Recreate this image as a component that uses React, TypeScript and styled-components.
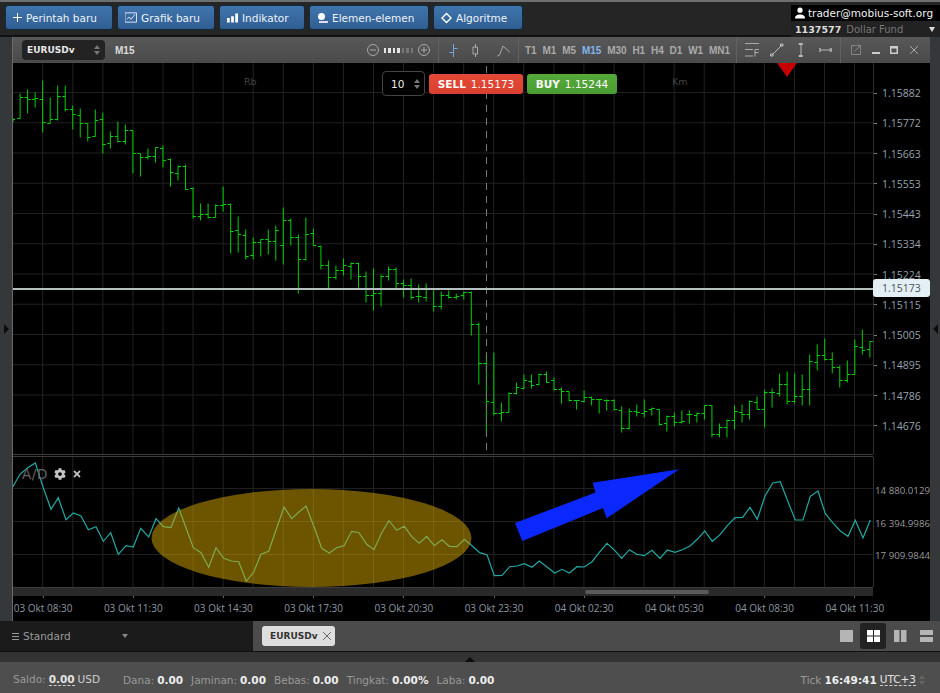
import { FC } from 'react';
import styled, { createGlobalStyle } from 'styled-components';
import { FaCog, FaTimes } from 'react-icons/fa';

const BASE_FONT = '"DejaVu Sans", "Liberation Sans", sans-serif';
const AXIS_FONT = '"Open Sans", "DejaVu Sans", sans-serif';

const GlobalStyle = createGlobalStyle`
  html, body {
    margin: 0;
    padding: 0;
    background: #2a2a2a;
  }
  * {
    box-sizing: border-box;
  }
`;

const Page = styled.div`
  width: 940px;
  height: 693px;
  display: flex;
  flex-direction: column;
  overflow: hidden;
  font-family: ${BASE_FONT};
  font-size: 10.5px;
  background: #2a2a2a;
`;

/* top bar */
const TopBar = styled.header`
  height: 37px;
  flex: none;
  display: flex;
  align-items: flex-start;
  gap: 4px;
  padding: 5px 0 0 5px;
  background: #252525;
  border-top: 2px solid #6d7072;
  border-bottom: 2px solid #111;
`;

const MenuButton = styled.button<{ $width: number }>`
  width: ${p => p.$width}px;
  height: 25px;
  margin-top: -2px;
  display: flex;
  align-items: center;
  gap: 4px;
  padding: 0 0 0 7px;
  font: inherit;
  font-size: 10.5px;
  color: #eef3f8;
  background: linear-gradient(#3f75ad, #305e92);
  border: 1px solid #16283c;
  border-radius: 3px;
`;

const Account = styled.div`
  margin: -2px 0 0 auto;
  width: 149px;
  height: 33px;
  display: flex;
  flex-direction: column;
`;

const AccountMail = styled.div`
  height: 16px;
  display: flex;
  align-items: center;
  gap: 2px;
  padding-left: 3px;
  background: #000;
  color: #f2f2f2;
  font-size: 10.5px;
`;

const AccountFund = styled.div`
  flex: 1;
  display: flex;
  align-items: center;
  gap: 5px;
  padding: 0 5px 0 4px;
  background: #222;
  color: #777;
  font-size: 10px;
  b {
    color: #ddd;
    font-size: 9.5px;
  }
  i {
    margin-left: auto;
    border-left: 3.5px solid transparent;
    border-right: 3.5px solid transparent;
    border-top: 5px solid #ddd;
  }
`;

/* chart window */
const Workspace = styled.main`
  height: 584px;
  flex: none;
  display: flex;
`;

const SideStrip = styled.div<{ $width: number; $flip?: boolean }>`
  width: ${p => p.$width}px;
  flex: none;
  display: flex;
  align-items: center;
  justify-content: center;
  background: #35383b;
  &::after {
    content: '';
    border-top: 5px solid transparent;
    border-bottom: 5px solid transparent;
    ${p => (p.$flip ? 'border-right: 5px solid #0c0c0c;' : 'border-left: 5px solid #0c0c0c;')}
  }
`;

const ChartWindow = styled.section`
  width: 918px;
  flex: none;
  display: flex;
  flex-direction: column;
  overflow: hidden;
  background: #000;
  border-left: 1px solid #6a6a6a;
`;

const Toolbar = styled.div`
  height: 26px;
  flex: none;
  display: flex;
  background: linear-gradient(#585858, #4a4a4a);
`;

const ToolSection = styled.div<{ $width: number; $gap: number; $pad: number }>`
  width: ${p => p.$width}px;
  flex: none;
  display: flex;
  align-items: center;
  gap: ${p => p.$gap}px;
  padding-left: ${p => p.$pad}px;
  border-left: 1px solid #616161;
  &:first-child {
    border-left: 0;
  }
`;

const SymbolSelect = styled.div`
  width: 83px;
  height: 20px;
  display: flex;
  align-items: center;
  justify-content: space-between;
  padding: 0 5px;
  font-size: 9px;
  font-weight: 700;
  color: #e8e8e8;
  background: #232323;
  border-radius: 4px;
`;

const Period = styled.span<{ $active?: boolean }>`
  font-family: "Liberation Sans", sans-serif;
  font-size: 10px;
  font-weight: 700;
  color: ${p => (p.$active ? '#82b4e6' : '#aaa')};
`;

const CurrentPeriod = styled(Period)`
  color: #ddd;
  margin-right: auto;
`;

const Spinner = styled.span<{ $color?: string }>`
  display: inline-flex;
  flex-direction: column;
  gap: 2px;
  &::before,
  &::after {
    content: '';
    border-left: 3px solid transparent;
    border-right: 3px solid transparent;
  }
  &::before {
    border-bottom: 4px solid ${p => p.$color || '#777'};
  }
  &::after {
    border-top: 4px solid ${p => p.$color || '#777'};
  }
`;

const ZoomDots = styled.span`
  display: flex;
  gap: 2px;
  margin: 0 -2px;
`;

const ZoomDot = styled.i<{ $on: boolean }>`
  width: 2.5px;
  height: 5px;
  background: ${p => (p.$on ? '#e6e6e6' : '#777')};
`;

const Icon = styled.svg<{ $left?: number; $right?: number }>`
  flex: none;
  display: block;
  fill: none;
  stroke-linecap: square;
  margin-left: ${p => p.$left || 0}px;
  margin-right: ${p => p.$right || 0}px;
`;

const Pane = styled.div<{ $height: number }>`
  height: ${p => p.$height}px;
  flex: none;
  display: flex;
  position: relative;
`;

const Plot = styled.svg<{ $height: number }>`
  width: 860px;
  height: ${p => p.$height}px;
  flex: none;
  display: block;
  background: #000;
`;

const PriceAxis = styled.div`
  flex: 1;
  display: flex;
  flex-direction: column;
  padding-top: 15px;
  border-left: 1px solid #2e2e2e;
`;

const PriceLabel = styled.div`
  height: 30.25px;
  flex: none;
  display: flex;
  align-items: center;
  font-family: ${AXIS_FONT};
  font-size: 10.5px;
  color: #97a3ad;
  &::before {
    content: '';
    width: 3px;
    height: 1px;
    margin-right: 5px;
    background: #777;
  }
`;

const PriceTag = styled.div`
  position: absolute;
  left: 860px;
  top: 216px;
  width: 57px;
  height: 18px;
  padding-left: 9px;
  line-height: 18px;
  font-family: ${AXIS_FONT};
  font-size: 10.5px;
  color: #4a5258;
  background: #e3eff4;
  border-radius: 3px;
`;

const WaterMark = styled.span<{ $left: number }>`
  position: absolute;
  left: ${p => p.$left}px;
  top: 13px;
  font-size: 9.5px;
  color: #444;
`;

const OrderBar = styled.div`
  position: absolute;
  left: 369px;
  top: 8px;
  display: flex;
  align-items: center;
  gap: 4px;
`;

const QuantityBox = styled.div`
  width: 43px;
  height: 25px;
  display: flex;
  align-items: center;
  justify-content: space-between;
  padding: 0 4px 0 8px;
  font-size: 10.5px;
  color: #eee;
  background: #000;
  border: 1px solid #444;
  border-radius: 4px;
`;

const TradeButton = styled.div<{ $width: number; $from: string; $to: string }>`
  width: ${p => p.$width}px;
  height: 20px;
  display: flex;
  align-items: center;
  justify-content: center;
  gap: 5px;
  font-size: 10.5px;
  color: #fbfbfb;
  background: linear-gradient(${p => p.$from}, ${p => p.$to});
  border-radius: 3px;
  b {
    font-weight: 700;
  }
`;

const TopMarker = styled.div`
  position: absolute;
  left: 764px;
  top: 0;
  border-left: 10px solid transparent;
  border-right: 10px solid transparent;
  border-top: 14px solid #c40000;
`;

const PaneDivider = styled.div`
  height: 3px;
  width: 860px;
  flex: none;
  border-top: 1px solid #3c3c3c;
  border-bottom: 1px solid #3c3c3c;
`;

const IndicatorAxis = styled.div`
  flex: 1;
  min-width: 0;
  display: flex;
  flex-direction: column;
  padding-top: 17px;
  border-left: 1px solid #2e2e2e;
`;

const IndicatorLabel = styled.div`
  height: 32.7px;
  flex: none;
  display: flex;
  align-items: center;
  justify-content: flex-end;
  white-space: nowrap;
  font-family: ${AXIS_FONT};
  font-size: 9.7px;
  color: #999;
`;

const IndicatorTitle = styled.div`
  position: absolute;
  left: 9px;
  top: 9px;
  display: flex;
  align-items: center;
  gap: 6px;
  font-size: 13.5px;
  letter-spacing: 0.6px;
  color: #666;
  svg {
    color: #c4c4c4;
  }
`;

const ScrollRow = styled.div`
  width: 860px;
  height: 9px;
  flex: none;
  padding: 2px 0 0 572px;
  background: #2a2a2a;
  border-top: 1px solid #3a3a3a;
`;

const ScrollThumb = styled.div`
  width: 124px;
  height: 4px;
  border-radius: 2px;
  background: #5a5a5a;
`;

const TimeAxis = styled.div`
  flex: 1;
  display: flex;
  margin-left: -15px;
`;

const TimeLabel = styled.div`
  width: 90.2px;
  flex: none;
  display: flex;
  flex-direction: column;
  align-items: center;
  gap: 4px;
  font-family: ${AXIS_FONT};
  font-size: 10px;
  line-height: 12px;
  white-space: nowrap;
  color: #8b97a1;
  &::before {
    content: '';
    width: 1px;
    height: 2px;
    background: #666;
  }
`;

/* tabs and status */
const TabBar = styled.div`
  height: 31px;
  flex: none;
  display: flex;
  background: #4b4b4b;
  border-bottom: 1px solid #111;
`;

const WorkspacePicker = styled.div`
  width: 253px;
  flex: none;
  display: flex;
  align-items: center;
  gap: 4px;
  padding-left: 12px;
  font-size: 10.5px;
  color: #999;
  background: #1b1b1b;
  i {
    margin-left: 47px;
    border-left: 3.5px solid transparent;
    border-right: 3.5px solid transparent;
    border-top: 4px solid #888;
  }
`;

const Tab = styled.div`
  width: 73px;
  height: 20px;
  margin: 5px 0 0 9px;
  display: flex;
  align-items: center;
  gap: 5px;
  padding-left: 8px;
  font-size: 9px;
  font-weight: 700;
  color: #333;
  background: #dedede;
  border-radius: 3px;
`;

const LayoutGroup = styled.div`
  margin-left: auto;
  display: flex;
  align-items: center;
  gap: 7px;
  padding-right: 7px;
`;

const LayoutButton = styled.div<{ $active?: boolean; $left?: number }>`
  width: ${p => (p.$active ? 26 : 13)}px;
  height: 26px;
  margin-left: ${p => p.$left || 0}px;
  display: flex;
  align-items: center;
  justify-content: center;
  border-radius: 3px;
  background: ${p => (p.$active ? '#222' : 'transparent')};
`;

const Splitter = styled.div`
  height: 10px;
  flex: none;
  display: flex;
  justify-content: center;
  padding: 2px 0 0;
  background: #333;
  &::after {
    content: '';
    border-left: 5px solid transparent;
    border-right: 5px solid transparent;
    border-bottom: 5px solid #0c0c0c;
  }
`;

const StatusBar = styled.footer`
  height: 31px;
  flex: none;
  display: flex;
  align-items: center;
  gap: 8px;
  padding: 4px 0 0 13px;
  color: #999;
  font-size: 10.5px;
  background: #4e4e4e;
`;

const StatusItem = styled.span<{ $wide?: boolean }>`
  display: flex;
  gap: 3px;
  white-space: nowrap;
  margin-right: ${p => (p.$wide ? 15 : 0)}px;
  b {
    color: #eee;
  }
`;

const Dotted = styled.span`
  color: #e4e4e4;
  border-bottom: 1px dashed #ccc;
`;

const DottedValue = styled(Dotted)`
  font-weight: 700;
`;

const Plain = styled.span`
  color: #d0d0d0;
`;

const Clock = styled.div`
  margin-left: auto;
  padding-right: 15px;
  display: flex;
  align-items: center;
  gap: 3px;
  b {
    color: #eee;
  }
`;

/* data */
type Bar = [number, number, number, number];

const toBars = (top: number, rows: Bar[]): Bar[] =>
  rows.map(row => row.map(v => Math.round(top + v / 3) + 0.5) as Bar);

const BARS: Bar[] = [
  ...toBars(70, [
    [70, 145, 145, 82], [58, 128, 82, 88], [65, 110, 88, 85], [30, 186, 88, 157], [82, 160, 160, 146],
    [45, 150, 146, 78], [45, 123, 78, 118], [104, 178, 118, 133], [115, 200, 135, 160], [158, 212, 160, 200],
    [118, 198, 197, 151], [127, 248, 148, 223], [183, 235, 220, 198], [152, 215, 197, 214], [163, 223, 214, 181],
    [180, 310, 181, 250], [250, 317, 250, 262], [235, 268, 261, 259], [230, 277, 259, 231], [226, 290, 235, 271],
    [265, 347, 268, 307], [286, 330, 310, 287], [282, 358, 289, 358], [352, 445, 355, 437], [400, 449, 437, 431],
    [400, 445, 431, 440], [403, 442, 440, 404], [348, 423, 406, 403], [400, 550, 402, 482], [438, 545, 479, 493],
    [478, 567, 496, 559], [502, 567, 556, 517], [506, 558, 517, 507], [478, 553, 507, 514], [465, 570, 514, 481],
    [411, 581, 526, 451], [445, 525, 451, 502], [492, 668, 502, 567], [440, 570, 567, 493], [473, 525, 490, 524],
  ]),
  ...toBars(230, [
    [45, 118, 47, 106], [90, 175, 106, 140], [106, 146, 140, 121], [83, 135, 121, 106], [97, 146, 108, 98],
    [97, 170, 98, 138], [124, 217, 138, 196], [115, 239, 196, 188], [132, 228, 188, 137], [109, 149, 137, 118],
    [112, 173, 118, 160], [146, 200, 160, 166], [143, 208, 166, 202], [163, 215, 199, 199], [160, 212, 202, 178],
    [178, 242, 178, 228], [183, 236, 228, 196], [179, 205, 196, 202], [188, 208, 202, 197], [184, 208, 196, 185],
    [184, 316, 185, 281], [277, 463, 281, 400], [375, 612, 400, 513], [366, 555, 516, 550], [516, 572, 550, 545],
    [487, 546, 545, 488], [456, 491, 488, 472], [433, 477, 475, 451], [431, 473, 454, 464], [430, 465, 463, 431],
    [422, 455, 431, 455], [440, 481, 451, 476], [470, 518, 476, 484], [484, 512, 484, 510], [510, 536, 511, 511],
    [479, 516, 514, 502], [498, 525, 502, 508], [506, 548, 508, 507], [508, 540, 510, 510],
  ]),
  ...toBars(260, [
    [418, 450, 420, 448], [438, 515, 450, 505], [445, 508, 505, 453], [432, 468, 453, 456], [417, 470, 458, 453],
    [442, 465, 448, 445], [447, 494, 448, 492], [465, 512, 490, 467], [457, 497, 467, 485], [450, 490, 485, 484],
    [450, 490, 463, 463], [456, 485, 464, 458], [435, 477, 458, 436], [435, 530, 436, 522], [490, 530, 522, 502],
    [476, 530, 502, 479], [436, 508, 479, 453], [433, 486, 456, 461], [420, 478, 461, 424], [408, 448, 426, 447],
    [388, 500, 447, 396], [385, 440, 396, 396], [340, 408, 400, 373], [334, 432, 373, 424], [340, 430, 424, 408],
    [343, 435, 408, 388], [282, 435, 388, 303], [252, 330, 305, 284], [233, 300, 284, 297], [277, 340, 297, 322],
    [316, 381, 320, 360], [300, 367, 360, 342], [238, 342, 342, 258], [207, 283, 260, 271], [243, 290, 268, 243],
  ]),
];

const barsPath = BARS.map(([high, low, open, close], i) => {
  const x = 20.1 + i * 7.52;
  return `M${x} ${high}V${low}M${x - 3} ${open}H${x}M${x} ${close}H${x + 3}`;
}).join('') + 'M13 119.5H15M13 118V122';

const toLine = (left: number, top: number, rows: number[][]): string[] =>
  rows.map(([x, y]) => `${(left + x / 3).toFixed(1)},${(top + y / 3).toFixed(1)}`);

const AD_LINE = [
  ...toLine(0, 450, [
    [38, 108], [60, 70], [83, 50], [106, 36], [130, 110], [153, 175], [175, 140], [198, 206], [220, 186], [243, 195],
    [265, 236], [288, 227], [310, 271], [332, 245], [355, 310], [378, 284], [400, 288], [422, 232], [446, 258],
    [468, 203], [490, 227], [513, 230], [536, 171], [558, 230], [580, 290], [603, 305], [626, 349], [648, 290],
    [671, 322], [694, 330], [716, 332], [739, 391], [761, 363], [783, 310], [806, 301], [829, 235], [852, 168],
    [875, 203], [897, 183],
  ]),
  ...toLine(300, 450, [
    [18, 165], [42, 227], [65, 292], [88, 306], [110, 290], [132, 284], [155, 241], [177, 245], [200, 280], [222, 296],
    [245, 245], [267, 209], [290, 238], [313, 226], [335, 257], [358, 277], [380, 256], [403, 284], [426, 266],
    [448, 286], [471, 287], [493, 265], [516, 284], [539, 305], [561, 311], [583, 374], [606, 373], [629, 347],
    [651, 345], [673, 338], [696, 349], [718, 330], [741, 348], [764, 366], [786, 355], [808, 366], [831, 347],
    [853, 348], [876, 332], [898, 304], [921, 277], [944, 298],
  ]),
  ...toLine(620, 450, [
    [5, 322], [28, 296], [50, 310], [73, 314], [96, 298], [120, 322], [142, 297], [165, 304], [187, 296], [210, 285],
    [232, 265], [254, 240], [277, 271], [300, 251], [322, 224], [345, 200], [368, 199], [390, 169], [412, 205],
    [435, 135], [458, 96], [481, 92], [503, 150], [526, 207], [549, 207], [571, 136], [594, 120], [616, 188],
    [638, 215], [661, 240], [684, 256], [706, 208], [729, 261], [751, 207],
  ]),
].join(' ');

const PRICES = [
  '1.15882', '1.15772', '1.15663', '1.15553', '1.15443', '1.15334',
  '1.15224', '1.15115', '1.15005', '1.14895', '1.14786', '1.14676',
];
const PERIODS = ['T1', 'M1', 'M5', 'M15', 'M30', 'H1', 'H4', 'D1', 'W1', 'MN1'];
const TIMES = [
  '03 Okt 08:30', '03 Okt 11:30', '03 Okt 14:30', '03 Okt 17:30', '03 Okt 20:30',
  '03 Okt 23:30', '04 Okt 02:30', '04 Okt 05:30', '04 Okt 08:30', '04 Okt 11:30',
];
const GRID_X = Array.from({ length: 28 }, (_, i) => 42.7 + i * 30.07);
const GRID_Y = Array.from({ length: 12 }, (_, i) => 92.5 + i * 30.25);

const VerticalGrid: FC<{ top: number; bottom: number }> = ({ top, bottom }) => (
  <g stroke="#232323">
    {GRID_X.map(x => (
      <line key={x} x1={x} x2={x} y1={top} y2={bottom} />
    ))}
  </g>
);

const UserIcon = () => (
  <Icon width="12" height="12" viewBox="0 0 12 12">
    <circle cx="6" cy="3.2" r="2.6" fill="#fff" />
    <path d="M1 11.5c0-3 2-4 5-4s5 1 5 4z" fill="#fff" />
  </Icon>
);

const App: FC = () => (
  <Page>
    <GlobalStyle />
    <TopBar>
      <MenuButton $width={108}>
        <Icon width="9" height="9" viewBox="0 0 9 9" stroke="#fff">
          <path d="M4.5 0v9M0 4.5h9" />
        </Icon>
        Perintah baru
      </MenuButton>
      <MenuButton $width={98}>
        <Icon width="12" height="11" viewBox="0 0 13 11" stroke="#eef">
          <path d="M.5.5h12v10H.5zM2.5 7l2-2 2 2.5 4-5" />
        </Icon>
        Grafik baru
      </MenuButton>
      <MenuButton $width={86}>
        <Icon width="11" height="10" viewBox="0 0 12 10" fill="#fff">
          <path d="M0 5h3v5H0zM4.5 3h3v7h-3zM9 0h3v10H9z" fill="#fff" />
        </Icon>
        Indikator
      </MenuButton>
      <MenuButton $width={120}>
        <Icon width="11" height="10" viewBox="0 0 11 10">
          <circle cx="4.5" cy="3.5" r="3.5" fill="#fff" />
          <path d="M2 8h9v2H2z" fill="#dde" />
        </Icon>
        Elemen-elemen
      </MenuButton>
      <MenuButton $width={90}>
        <Icon width="11" height="12" viewBox="0 0 12 12" stroke="#fff" strokeWidth="1.6">
          <path d="M6 1l5 5-5 5-5-5z" />
        </Icon>
        Algoritme
      </MenuButton>
      <Account>
        <AccountMail>
          <UserIcon />
          trader@mobius-soft.org
        </AccountMail>
        <AccountFund>
          <b>1137577</b> Dollar Fund <i />
        </AccountFund>
      </Account>
    </TopBar>

    <Workspace>
      <SideStrip $width={12} />
      <ChartWindow>
        <Toolbar>
          <ToolSection $width={425} $gap={10} $pad={9}>
            <SymbolSelect>
              EURUSDv
              <Spinner />
            </SymbolSelect>
            <CurrentPeriod>M15</CurrentPeriod>
            <Icon width="12" height="12" viewBox="0 0 12 12" stroke="#aaa" $right={-3}>
              <circle cx="6" cy="6" r="5.5" />
              <path d="M3.5 6h5" />
            </Icon>
            <ZoomDots>
              {[1, 1, 1, 1, 0, 0, 0].map((on, i) => (
                <ZoomDot key={i} $on={!!on} />
              ))}
            </ZoomDots>
            <Icon width="12" height="12" viewBox="0 0 12 12" stroke="#aaa" $left={-3} $right={8}>
              <circle cx="6" cy="6" r="5.5" />
              <path d="M3.5 6h5M6 3.5v5" />
            </Icon>
          </ToolSection>
          <ToolSection $width={80} $gap={14} $pad={10}>
            <Icon width="9" height="13" viewBox="0 0 9 13" stroke="#6fa8e0">
              <path d="M4.5 0v13M1 8.5h3.5M4.5 4.5H8" />
            </Icon>
            <Icon width="7" height="13" viewBox="0 0 7 13" stroke="#aaa">
              <path d="M3.5 0v3M3.5 10v3M1.5 3h4v7h-4z" />
            </Icon>
            <Icon width="13" height="13" viewBox="0 0 13 13" stroke="#aaa" $left={4}>
              <path d="M.5 12L2.5 11 6 2l6.5 6" />
            </Icon>
          </ToolSection>
          <ToolSection $width={218} $gap={5.8} $pad={6}>
            {PERIODS.map(p => (
              <Period key={p} $active={p === 'M15'}>
                {p}
              </Period>
            ))}
          </ToolSection>
          <ToolSection $width={104} $gap={11} $pad={8}>
            <Icon width="14" height="14" viewBox="0 0 14 14" stroke="#aaa">
              <path d="M.5.5h13M.5 6.5h7M.5 13h7M10 13V6.5h3.5M10 9.5h3" />
            </Icon>
            <Icon width="14" height="14" viewBox="0 0 14 14" stroke="#bbb">
              <path d="M2 12L12 2M1 11h2v2H1zM11 1h2v2h-2z" />
            </Icon>
            <Icon width="6" height="14" viewBox="0 0 6 14" stroke="#bbb" $left={3}>
              <path d="M3 2v10M1.5.5h3v1h-3zM1.5 12.5h3v1h-3z" />
            </Icon>
            <Icon width="13" height="6" viewBox="0 0 14 6" stroke="#bbb" $left={4}>
              <path d="M2 3h10M.5 1.5h1v3h-1zM12.5 1.5h1v3h-1z" />
            </Icon>
          </ToolSection>
          <ToolSection $width={90} $gap={10.5} $pad={10}>
            <Icon width="10" height="10" viewBox="0 0 10 10" stroke="#888">
              <path d="M4 .5H.5v9h9V6M6 .5h3.5V4M9.5.5L4 6" />
            </Icon>
            <Icon width="8" height="8" viewBox="0 0 8 8" stroke="#ccc" strokeWidth="2">
              <path d="M1 7h6" />
            </Icon>
            <Icon width="8" height="8" viewBox="0 0 8 8" stroke="#ccc">
              <path d="M.5 1.5h7v6h-7zM.5 1h7" strokeWidth="2" />
            </Icon>
            <Icon width="8" height="8" viewBox="0 0 8 8" stroke="#aaa" $left={1}>
              <path d="M.5.5l7 7M7.5.5l-7 7" />
            </Icon>
          </ToolSection>
        </Toolbar>

        <Pane $height={391}>
          <Plot $height={391} viewBox="13 63 860 391">
            <VerticalGrid top={63} bottom={454} />
            <g stroke="#202020">
              {GRID_Y.map(y => (
                <line key={y} x1={13} x2={873} y1={y} y2={y} />
              ))}
            </g>
            <path d={barsPath} stroke="#00d000" fill="none" />
            <line x1={486.5} x2={486.5} y1={66} y2={454} stroke="#777" strokeDasharray="7 6" />
            <rect x={13} y={288} width={860} height={2} fill="#b4c0c0" />
          </Plot>
          <PriceAxis>
            {PRICES.map(price => (
              <PriceLabel key={price}>{price}</PriceLabel>
            ))}
          </PriceAxis>
          <PriceTag>1.15173</PriceTag>
          <WaterMark $left={231}>Rb</WaterMark>
          <WaterMark $left={659}>Km</WaterMark>
          <OrderBar>
            <QuantityBox>
              10
              <Spinner />
            </QuantityBox>
            <TradeButton $width={94} $from="#e64a36" $to="#d8402f">
              <b>SELL</b> 1.15173
            </TradeButton>
            <TradeButton $width={90} $from="#55aa3a" $to="#4a9c32">
              <b>BUY</b> 1.15244
            </TradeButton>
          </OrderBar>
          <TopMarker />
        </Pane>

        <PaneDivider />

        <Pane $height={130}>
          <Plot $height={130} viewBox="13 456 860 130">
            <VerticalGrid top={456} bottom={586} />
            <g stroke="#202020">
              <line x1={13} x2={873} y1={487.5} y2={487.5} />
              <line x1={13} x2={873} y1={520.5} y2={520.5} />
              <line x1={13} x2={873} y1={553.5} y2={553.5} />
            </g>
            <polyline points={AD_LINE} fill="none" stroke="#20aaa4" strokeWidth="1.2" />
            <ellipse cx={311.5} cy={537} rx={160} ry={49} fill="#d9aa00" fillOpacity="0.5" />
            <polygon
              points="515,522 595.5,491.5 592.7,481.7 679.3,468.3 606.7,517.3 603,507 522.3,540"
              fill="#0a28ff"
            />
          </Plot>
          <IndicatorAxis>
            <IndicatorLabel>14 880.0129</IndicatorLabel>
            <IndicatorLabel>16 394.9986</IndicatorLabel>
            <IndicatorLabel>17 909.9844</IndicatorLabel>
          </IndicatorAxis>
          <IndicatorTitle>
            A/D
            <FaCog size={12} />
            <FaTimes size={10} />
          </IndicatorTitle>
        </Pane>

        <ScrollRow>
          <ScrollThumb />
        </ScrollRow>

        <TimeAxis>
          {TIMES.map(time => (
            <TimeLabel key={time}>{time}</TimeLabel>
          ))}
        </TimeAxis>
      </ChartWindow>
      <SideStrip $width={10} $flip />
    </Workspace>

    <TabBar>
      <WorkspacePicker>
        <Icon width="7" height="7" viewBox="0 0 7 7" stroke="#999">
          <path d="M0 .5h7M0 3.5h7M0 6.5h7" />
        </Icon>
        Standard
        <i />
      </WorkspacePicker>
      <Tab>
        EURUSDv
        <Icon width="8" height="8" viewBox="0 0 8 8" stroke="#666">
          <path d="M.5.5l7 7M7.5.5l-7 7" />
        </Icon>
      </Tab>
      <LayoutGroup>
        <LayoutButton>
          <Icon width="13" height="12" viewBox="0 0 13 12">
            <rect width="13" height="12" fill="#b5b5b5" />
          </Icon>
        </LayoutButton>
        <LayoutButton $active>
          <Icon width="13" height="12" viewBox="0 0 13 12">
            <path d="M0 0h6v5.5H0zM7 0h6v5.5H7zM0 6.5h6V12H0zM7 6.5h6V12H7z" fill="#fff" />
          </Icon>
        </LayoutButton>
        <LayoutButton $left={1}>
          <Icon width="13" height="12" viewBox="0 0 13 12">
            <path d="M0 0h5.5v12H0zM7 0h5.5v12H7z" fill="#b5b5b5" />
          </Icon>
        </LayoutButton>
        <LayoutButton $left={6}>
          <Icon width="13" height="12" viewBox="0 0 13 12">
            <path d="M0 0h13v5H0zM0 7h13v5H0z" fill="#b5b5b5" />
          </Icon>
        </LayoutButton>
      </LayoutGroup>
    </TabBar>
    <Splitter />

    <StatusBar>
      <StatusItem $wide>
        Saldo: <DottedValue>0.00</DottedValue> <Plain>USD</Plain>
      </StatusItem>
      <StatusItem>
        Dana: <b>0.00</b>
      </StatusItem>
      <StatusItem>
        Jaminan: <b>0.00</b>
      </StatusItem>
      <StatusItem>
        Bebas: <b>0.00</b>
      </StatusItem>
      <StatusItem>
        Tingkat: <b>0.00%</b>
      </StatusItem>
      <StatusItem>
        Laba: <b>0.00</b>
      </StatusItem>
      <Clock>
        Tick <b>16:49:41</b> <Dotted>UTC+3</Dotted>
        <Spinner $color="#666" />
      </Clock>
    </StatusBar>
  </Page>
);

export default App;
